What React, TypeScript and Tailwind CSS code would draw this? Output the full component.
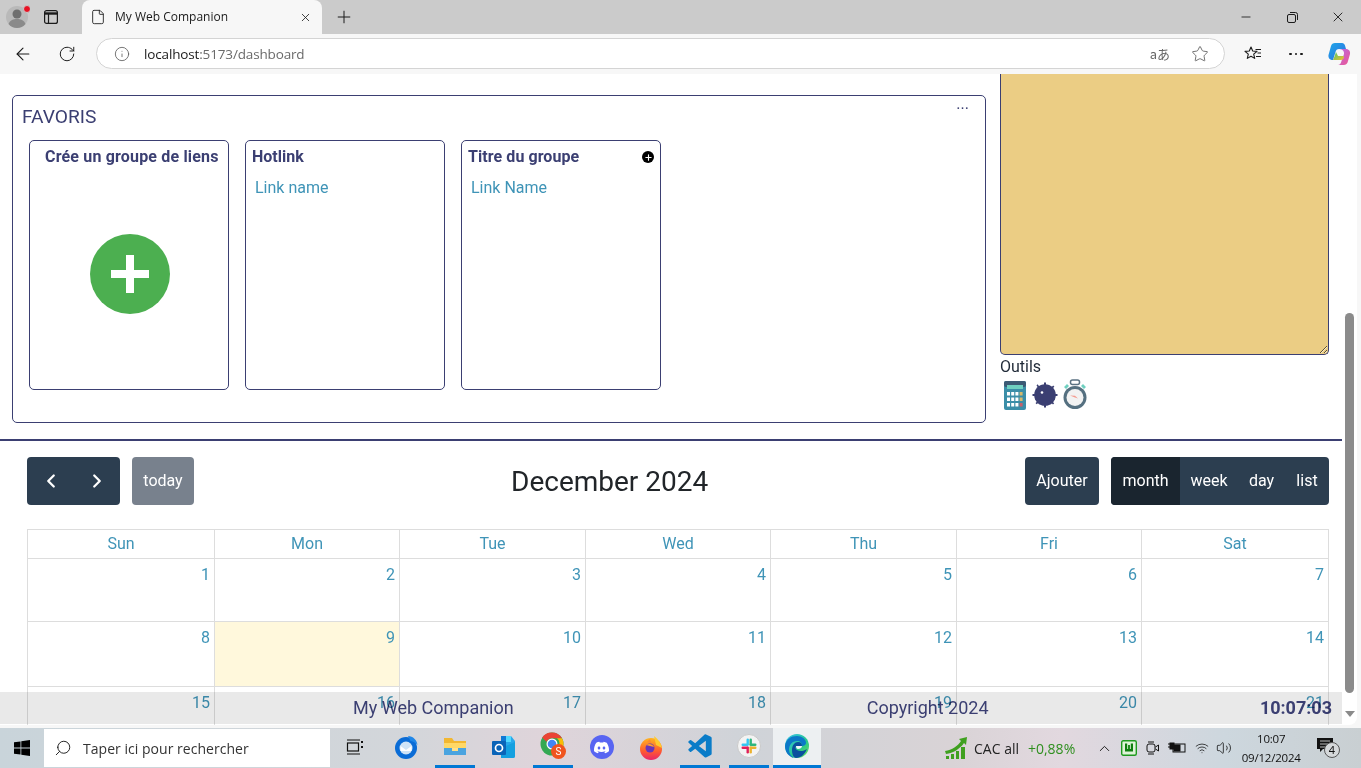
import { ArrowLeft, ChevronLeft, ChevronRight, ChevronUp, Info, Minus, Plus, RotateCw, Star, Volume2, Wifi, X, File, Search } from 'lucide-react';
import { SiDiscord } from 'react-icons/si';
import { BiLogoVisualStudio } from 'react-icons/bi';

const weeks = [
  [1, 2, 3, 4, 5, 6, 7],
  [8, 9, 10, 11, 12, 13, 14],
  [15, 16, 17, 18, 19, 20, 21],
];
const days = ['Sun', 'Mon', 'Tue', 'Wed', 'Thu', 'Fri', 'Sat'];

function Avatar() {
  return (
    <svg width="24" height="24" viewBox="0 0 24 24" className="ml-[5px]">
      <circle cx="11" cy="12" r="11" fill="#b9b9b9" />
      <circle cx="11" cy="9" r="4.5" fill="#6f6f6f" />
      <path d="M2.5 19c1.5-4 5-5 8.500-5s7 1 8.500 5a11 11 0 0 1-17 0z" fill="#8a8a8a" />
      <circle cx="21" cy="4" r="3.500" fill="#e81123" stroke="#cbcbcb" />
    </svg>
  );
}

function TabActions() {
  return (
    <svg width="16" height="16" viewBox="0 0 16 16" fill="none" stroke="#1a1a1a" strokeWidth="1.200">
      <rect x="1.600" y="1.600" width="12.800" height="12.800" rx="2" />
      <path d="M2 4.500h12" strokeWidth="2.400" />
      <path d="M5.500 5v9" />
    </svg>
  );
}

function Restore() {
  return (
    <svg width="11" height="11" viewBox="0 0 11 11" fill="none" stroke="#1a1a1a">
      <rect x="0.500" y="2.500" width="8" height="8" rx="1.500" />
      <path d="M3 .5h5.500a2 2 0 0 1 2 2V8" />
    </svg>
  );
}

function Favorites() {
  return (
    <svg width="18" height="18" viewBox="0 0 18 18" fill="none" stroke="#1a1a1a" strokeWidth="1.100">
      <path d="M7 2l1.700 4 4.300.4-3.300 2.800 1 4.200L7 11.200l-3.700 2.200 1-4.200L1 6.400l4.300-.4z" strokeLinejoin="round" />
      <path d="M11.500 4.500H17M13.500 8H17M12 11.500h5" />
    </svg>
  );
}

function Copilot() {
  return (
    <svg width="24" height="24" viewBox="0 0 24 24">
      <defs>
        <linearGradient id="copA" x1="0" y1="0" x2="1" y2="1">
          <stop offset="0" stopColor="#1fa8e8" />
          <stop offset="1" stopColor="#2f6fe0" />
        </linearGradient>
        <linearGradient id="copB" x1="0" y1="0" x2="1" y2="1">
          <stop offset="0" stopColor="#b56be8" />
          <stop offset="1" stopColor="#f0568e" />
        </linearGradient>
        <linearGradient id="copC" x1="0" y1="0" x2="1" y2="1">
          <stop offset="0" stopColor="#4cc36a" />
          <stop offset="1" stopColor="#f2c230" />
        </linearGradient>
      </defs>
      <path d="M8 1h7c1.500 0 2.500 1 3 2.500l1 3.500H12c-2 0-3 1-3.500 3L6 18c-3 0-5-2-4.500-5L4 4c.5-2 2-3 4-3z" fill="url(#copA)" />
      <path d="M12 7h7c3 0 4.500 2.500 4 5l-2 7c-.5 2.500-2 4-4.500 4H11c1.500 0 2.500-1 3-2.500L17 12c.5-2-1-5-5-5z" fill="url(#copB)" />
      <path d="M9 10c-1 3-2 6-3 8h8c1.500 0 2.500-1 3-2.500l-.5-1.500H11z" fill="url(#copC)" />
    </svg>
  );
}

function Calculator() {
  const keys = [0, 1, 2, 3, 4, 5, 6, 7, 8, 9, 10, 11];
  return (
    <svg width="22" height="29" viewBox="0 0 22 29">
      <rect width="22" height="29" rx="2" fill="#3b8ea8" />
      <rect width="22" height="6" rx="2" fill="#3c5a74" />
      <rect x="3" y="4" width="16" height="4" fill="#6fd0c0" />
      {keys.map((k) => (
        <rect
          key={k}
          x={3 + (k % 4) * 4.200}
          y={11 + Math.floor(k / 4) * 5.500}
          width="3"
          height="3.500"
          fill={k % 4 === 3 ? (k === 11 ? '#c9606a' : '#d8b96a') : '#ffffff'}
        />
      ))}
    </svg>
  );
}

function Mine() {
  return (
    <svg width="26" height="26" viewBox="0 0 26 26" fill="#3b3f72">
      <circle cx="13" cy="13" r="10.800" />
      <path d="M12 0.500h2v4h-2zM12 21.500h2v4h-2zM0.500 12h4v2h-4zM21.500 12h4v2h-4zM4.500 3.500l1.200-1.200 2 3-1.200 1zM18.500 20l1-1.200 2.700 2.500-1.200 1.200zM3.500 21l3-2.500 1 1.200-2.800 2.500zM18.500 6l2.700-2.500 1.200 1.200-3 2.500z" />
      <circle cx="10" cy="10.500" r="1.300" fill="#ffffff" />
    </svg>
  );
}

function Stopwatch() {
  return (
    <svg width="26" height="32" viewBox="0 0 26 32">
      <rect x="8.500" y="1" width="9" height="4.500" rx="2" fill="none" stroke="#5b7282" strokeWidth="1.500" />
      <path d="M2 8l3-3 2 2-3 3zM24 8l-3-3-2 2 3 3z" fill="#6fd0c0" />
      <circle cx="13" cy="18.500" r="11.500" fill="#557080" />
      <circle cx="13" cy="18.500" r="8.500" fill="#f2f2f2" />
      <path d="M13 18.500l-5-2 5 .2 3 2.800z" fill="#f59a8e" />
    </svg>
  );
}

function Thunderbird() {
  return (
    <svg width="24" height="24" viewBox="0 0 24 24">
      <circle cx="12" cy="13" r="11" fill="#0a6cd6" />
      <path d="M14 1c5 0 9 4 9.500 9-1.500-2-4-3.500-7-4z" fill="#1f87e8" />
      <circle cx="12" cy="13" r="6.500" fill="#cfe4f7" />
      <path d="M6.500 11l5.500 4 5.500-4v5h-11z" fill="#ffffff" />
    </svg>
  );
}

function Explorer() {
  return (
    <svg width="24" height="22" viewBox="0 0 24 22">
      <path d="M1 3h8l2 3h12v14H1z" fill="#f2b731" />
      <rect x="1" y="8" width="22" height="5" fill="#ffd866" />
      <rect x="1" y="13" width="22" height="7" fill="#4aa4e0" />
      <rect x="9" y="13" width="6" height="3" fill="#ffe08a" />
    </svg>
  );
}

function Outlook() {
  return (
    <svg width="24" height="24" viewBox="0 0 24 24">
      <path d="M9 1h10l4 5v15a2 2 0 0 1-2 2H9z" fill="#28a8ea" />
      <path d="M14 1h5v6h-5z" fill="#50d9ff" />
      <path d="M9 1h5v6H9z" fill="#0f78d4" />
      <path d="M9 13l14-6v14a2 2 0 0 1-2 2H9z" fill="#14a0e0" />
      <rect x="0" y="6" width="14" height="14" rx="1" fill="#0a64b8" />
      <circle cx="7" cy="13" r="3.500" fill="none" stroke="#ffffff" strokeWidth="1.700" />
    </svg>
  );
}

function Chrome() {
  return (
    <svg width="26" height="27" viewBox="0 0 26 27">
      <circle cx="12" cy="12" r="11.500" fill="#34a853" />
      <path d="M12 .5a11.500 11.500 0 0 1 10 5.800H12a6 6 0 0 0-5.500 3.500L2.200 5.500A11.500 11.500 0 0 1 12 .5z" fill="#ea4335" />
      <path d="M22 6.300a11.500 11.500 0 0 1-8 17L18 15a6 6 0 0 0-1-8.700z" fill="#fbbc05" />
      <circle cx="12" cy="12" r="5.500" fill="#ffffff" />
      <circle cx="12" cy="12" r="4.300" fill="#4285f4" />
      <circle cx="18.500" cy="19.500" r="7.500" fill="#f0541e" />
      <text x="18.500" y="23" textAnchor="middle" fontSize="10" fill="#ffffff" fontFamily="Roboto, sans-serif">S</text>
    </svg>
  );
}

function Firefox() {
  return (
    <svg width="24" height="25" viewBox="0 0 24 25">
      <defs>
        <linearGradient id="ffA" x1="0" y1="0" x2="0" y2="1">
          <stop offset="0" stopColor="#ffb520" />
          <stop offset="0.600" stopColor="#ff5a30" />
          <stop offset="1" stopColor="#e8256a" />
        </linearGradient>
      </defs>
      <circle cx="12" cy="14" r="11" fill="url(#ffA)" />
      <path d="M15 1c4 3 7 7 8 12l-6-3z" fill="#ffcb2e" />
      <path d="M4 6l4 1 3-3 1 4z" fill="#ff8a2a" />
      <circle cx="11" cy="13" r="4.500" fill="#6a35b8" />
      <path d="M7 10c3-2 7-1 8 2l-4-1z" fill="#ff9f2a" />
    </svg>
  );
}

function Slack() {
  return (
    <svg width="24" height="24" viewBox="0 0 24 24">
      <circle cx="12" cy="12" r="11.500" fill="#f3f3f3" stroke="#c9c9c9" />
      <rect x="9.500" y="4.500" width="2.400" height="7" rx="1.200" fill="#36c5f0" />
      <rect x="4.500" y="9.500" width="7" height="2.400" rx="1.200" fill="#36c5f0" />
      <rect x="12.500" y="4.500" width="2.400" height="7" rx="1.200" fill="#2eb67d" />
      <rect x="12.500" y="9.500" width="7" height="2.400" rx="1.200" fill="#2eb67d" />
      <rect x="12.500" y="12.500" width="2.400" height="7" rx="1.200" fill="#ecb22e" />
      <rect x="12.500" y="12.500" width="7" height="2.400" rx="1.200" fill="#ecb22e" />
      <rect x="9.500" y="12.500" width="2.400" height="7" rx="1.200" fill="#e01e5a" />
      <rect x="4.500" y="12.500" width="7" height="2.400" rx="1.200" fill="#e01e5a" />
    </svg>
  );
}

function Edge() {
  return (
    <svg width="24" height="24" viewBox="0 0 24 24">
      <defs>
        <linearGradient id="edA" x1="0" y1="0" x2="1" y2="1">
          <stop offset="0" stopColor="#35c1f1" />
          <stop offset="0.600" stopColor="#28c98a" />
          <stop offset="1" stopColor="#6fdc5a" />
        </linearGradient>
      </defs>
      <circle cx="12" cy="12" r="12" fill="url(#edA)" />
      <path d="M0 12C1 5 6 2 12 2c5 0 9 3 9 7 0 2-2 3-4 3 0-3-2-5-5-5-5 0-8 4-8 9 0 3 2 6 5 8C4 23 0 18 0 12z" fill="#0c78c8" />
      <path d="M7 16c0-5 3-8 6-8 3 0 4 2 4 4h-5c-2 0-2 3 0 4 3 2 7 1 10-1-2 5-6 9-11 9-2 0-4-3-4-8z" fill="#0a4f9e" />
      <path d="M11 12h6c0 2-2 3-4 3-1 0-2-1-2-3z" fill="#f2f7fb" />
    </svg>
  );
}

function Cac() {
  return (
    <svg width="24" height="24" viewBox="0 0 24 24" fill="#3fa01f">
      <path d="M1 15C8 14 14 10 17 5l-2-2 8-2-1 8-2-2C16 13 9 17 2 18z" />
      <rect x="2" y="20" width="3" height="3" />
      <rect x="7" y="18" width="3" height="5" />
      <rect x="12" y="15" width="3" height="8" />
      <rect x="17" y="11" width="4" height="12" />
    </svg>
  );
}

function TaskView() {
  return (
    <svg width="18" height="16" viewBox="0 0 18 16" fill="none" stroke="#111111" strokeWidth="1.200">
      <path d="M1 1h13M1 15h13" />
      <rect x="1.500" y="4" width="11" height="8" />
      <path d="M16 2v2M16 7v2" strokeWidth="2" />
    </svg>
  );
}

function TrayIcons() {
  return (
    <>
      <svg width="16" height="16" viewBox="0 0 16 16" className="ml-[8px]">
        <rect x="0.700" y="0.700" width="14.600" height="14.600" rx="1.500" fill="#dff3d8" stroke="#1f9a1f" strokeWidth="1.400" />
        <path d="M4 3.500v8h8v-8h-2.200v5.500H8.900V5H7.100v4H6.200V3.500z" fill="#0f7f0f" />
      </svg>
      <svg width="14" height="18" viewBox="0 0 14 18" fill="none" stroke="#111111" className="ml-[9px]">
        <path d="M2 3h6M2 15h6" />
        <rect x="1" y="5" width="8" height="8" rx="2" />
        <path d="M9.500 8l3-2v6l-3-2" />
      </svg>
      <svg width="18" height="12" viewBox="0 0 18 12" fill="none" stroke="#111111" className="ml-[8px]">
        <path d="M0 2h2M0 5h2" />
        <rect x="2" y="1" width="4" height="6" fill="#111111" />
        <rect x="5" y="2" width="12" height="8" />
        <rect x="6" y="3" width="6" height="6" fill="#111111" />
      </svg>
    </>
  );
}

function Notification() {
  return (
    <div className="relative w-[20px] h-[20px] mr-[24px]">
      <svg width="16" height="14" viewBox="0 0 16 14">
        <path d="M0 0h16v11H6l-3 3v-3H0z" fill="#111111" />
        <path d="M3 3h10M3 6h10M3 9h7" stroke="#e8e8e8" strokeWidth="0.800" />
      </svg>
      <span className="absolute left-[7px] top-[4px] w-[16px] h-[16px] rounded-full border border-[#555] bg-[#d5d8da] text-[11px] leading-[14px] text-center text-[#111] font-['Noto_Sans',sans-serif]">
        4
      </span>
    </div>
  );
}

function BrowserChrome() {
  return (
    <>
      <div className="h-[34px] bg-[#cbcbcb] flex items-end shrink-0">
        <div className="w-[82px] h-[34px] flex items-center pl-[1px]">
          <Avatar />
          <span className="ml-[13px]">
            <TabActions />
          </span>
        </div>
        <div className="w-[240px] h-[34px] bg-[#f7f7f7] rounded-t-lg flex items-center pl-[8px] pr-[10px]">
          <File size={16} strokeWidth={1.300} color="#1a1a1a" />
          <span className="ml-[9px] flex-1 text-[12px] text-[#1a1a1a] font-['Open_Sans',sans-serif]">My Web Companion</span>
          <X size={13} strokeWidth={1.500} color="#1a1a1a" />
        </div>
        <div className="h-[34px] flex items-center ml-[12px]">
          <Plus size={20} strokeWidth={1.200} color="#1a1a1a" />
        </div>
        <div className="h-[34px] flex items-center ml-auto">
          <div className="w-[46px] flex justify-center">
            <Minus size={14} strokeWidth={1.400} color="#111111" />
          </div>
          <div className="w-[46px] flex justify-center">
            <Restore />
          </div>
          <div className="w-[46px] flex justify-center">
            <X size={16} strokeWidth={1.300} color="#111111" />
          </div>
        </div>
      </div>
      <div className="h-[40px] bg-[#f7f7f7] flex items-center shrink-0">
        <div className="w-[46px] flex justify-center">
          <ArrowLeft size={20} strokeWidth={1.300} color="#1a1a1a" />
        </div>
        <div className="w-[42px] flex justify-center">
          <RotateCw size={18} strokeWidth={1.300} color="#1a1a1a" />
        </div>
        <div className="ml-[8px] mb-[1px] w-[1129px] h-[31px] rounded-full bg-white border border-[#d4d4d4] flex items-center pl-[17px] pr-[15px]">
          <Info size={16} strokeWidth={1.200} color="#555" />
          <span className="ml-[14px] pt-[1px] text-[13.500px] text-[#1a1a1a] font-['Open_Sans',sans-serif] tracking-[-0.15px]">
            localhost<span className="text-[#6a6a6a]">:5173/dashboard</span>
          </span>
          <span className="ml-auto text-[13px] text-[#666] font-['Noto_Sans_CJK_JP',sans-serif]">aあ</span>
          <Star size={18} strokeWidth={1.100} color="#555" className="ml-[21px]" />
        </div>
        <div className="ml-[19px]">
          <Favorites />
        </div>
        <div className="ml-[27px] flex gap-[3px]">
          <span className="w-[2.500px] h-[2.500px] rounded-full bg-[#1a1a1a]" />
          <span className="w-[2.500px] h-[2.500px] rounded-full bg-[#1a1a1a]" />
          <span className="w-[2.500px] h-[2.500px] rounded-full bg-[#1a1a1a]" />
        </div>
        <div className="ml-[24px]">
          <Copilot />
        </div>
      </div>
    </>
  );
}

function Favoris() {
  return (
    <section className="relative mt-[21px] w-[974px] h-[328px] border border-[#3b3f72] rounded-[5px] pl-[9px] pt-[9px]">
      <h2 className="text-[19.200px] leading-[24px] text-[#3b3f72]">FAVORIS</h2>
      <span className="absolute right-[16px] top-[1px] text-[16px] leading-[14px] text-[#3b3f72]">...</span>
      <div className="flex gap-[16px] mt-[11px] pl-[7px]">
        <div className="w-[200px] h-[250px] border border-[#3b3f72] rounded-[5px] flex flex-col">
          <h3 className="pl-[15px] pt-[6px] text-[16px] leading-[20px] font-bold text-[#3b3f72] whitespace-nowrap tracking-[0.17px]">Crée un groupe de liens</h3>
          <div className="mt-[67px] ml-[60px] w-[80px] h-[80px] rounded-full bg-[#4caf50] flex items-center justify-center">
            <svg width="38" height="38" viewBox="0 0 38 38" fill="#ffffff">
              <path d="M15 0h8v15h15v8H23v15h-8V23H0v-8h15z" />
            </svg>
          </div>
        </div>
        <div className="w-[200px] h-[250px] border border-[#3b3f72] rounded-[5px] px-[6px] pt-[6px]">
          <h3 className="text-[16px] leading-[20px] font-bold text-[#3b3f72]">Hotlink</h3>
          <p className="mt-[11px] ml-[3px] text-[16px] leading-[20px] text-[#3f94b7]">Link name</p>
        </div>
        <div className="w-[200px] h-[250px] border border-[#3b3f72] rounded-[5px] px-[6px] pt-[6px]">
          <div className="flex items-center justify-between">
            <h3 className="text-[16px] leading-[20px] font-bold text-[#3b3f72] tracking-[0.07px]">Titre du groupe</h3>
            <span className="w-[12px] h-[12px] rounded-full bg-black flex items-center justify-center">
              <Plus size={9} strokeWidth={3} color="#ffffff" />
            </span>
          </div>
          <p className="mt-[11px] ml-[3px] text-[16px] leading-[20px] text-[#3f94b7]">Link Name</p>
        </div>
      </div>
    </section>
  );
}

function Notes() {
  return (
    <aside className="ml-[14px] w-[329px]">
      <textarea
        readOnly
        className="block w-[329px] h-[281px] bg-[#ebcd84] border border-t-0 border-[#3b3f72] rounded-b-[5px] outline-none"
      />
      <p className="mt-[2px] text-[16px] leading-[19px] text-[#1f2937]">Outils</p>
      <div className="flex items-center h-[32px] mt-[3px] pl-[4px]">
        <Calculator />
        <span className="ml-[6px]">
          <Mine />
        </span>
        <span className="ml-[4px]">
          <Stopwatch />
        </span>
      </div>
    </aside>
  );
}

function Calendar() {
  return (
    <div className="pl-[27px] pr-[13px] pt-[16px]">
      <div className="flex items-center h-[48px]">
        <div className="w-[93px] h-[48px] rounded-[4px] bg-[#2c3e50] flex items-center text-white">
          <span className="w-[47px] flex justify-center">
            <ChevronLeft size={22} strokeWidth={2.500} />
          </span>
          <span className="w-[46px] flex justify-center">
            <ChevronRight size={22} strokeWidth={2.500} />
          </span>
        </div>
        <div className="ml-[12px] w-[62px] h-[48px] rounded-[4px] bg-[#78818d] text-white text-[16px] flex items-center justify-center">today</div>
        <h1 className="ml-[317px] mt-[2px] w-[199px] text-[28px] leading-[34px] text-[#212529] whitespace-nowrap">December 2024</h1>
        <div className="ml-auto w-[74px] h-[48px] rounded-[4px] bg-[#2c3e50] text-white text-[16px] flex items-center justify-center">Ajouter</div>
        <div className="ml-[12px] w-[218px] h-[48px] rounded-[4px] bg-[#2c3e50] text-white text-[16px] flex overflow-hidden">
          <span className="w-[69px] bg-[#1a252f] flex items-center justify-center">month</span>
          <span className="w-[58px] flex items-center justify-center">week</span>
          <span className="w-[47px] flex items-center justify-center">day</span>
          <span className="w-[44px] flex items-center justify-center">list</span>
        </div>
      </div>
      <div className="mt-[24px] w-[1302px] border-l border-t border-[#ddd] grid grid-cols-[187px_185px_186px_185px_186px_185px_187px] text-[#3f94b7] text-[16px]">
        {days.map((d) => (
          <div key={d} className="h-[29px] border-r border-b border-[#ddd] flex items-center justify-center">
            {d}
          </div>
        ))}
        {weeks.map((w, i) =>
          w.map((n) => (
            <div
              key={n}
              className={`border-r border-b border-[#ddd] pr-[4px] pt-[6px] text-right leading-[20px] ${i === 0 ? 'h-[63px]' : 'h-[65px]'} ${n === 9 ? 'bg-[#fff8dc]' : ''}`}
            >
              {n}
            </div>
          )),
        )}
      </div>
    </div>
  );
}

function Taskbar() {
  const icon = 'w-[49px] h-[38px] flex items-center justify-center';
  const slot = 'w-[49px] h-[40px] flex justify-center';
  const running = 'w-[40px] h-[40px] pb-[2px] flex items-center justify-center border-b-[3px] border-[#0078d4]';
  return (
    <div className="h-[40px] shrink-0 flex items-start bg-[linear-gradient(90deg,#c9d4da_0%,#d3d6da_30%,#dfd4da_40%,#cfd3d8_55%,#d9d3d6_70%,#e2d8df_78%,#cdd7de_90%,#c9cfd2_100%)]">
      <div className="w-[44px] h-[38px] flex items-center justify-center pt-[2px]">
        <svg width="16" height="16" viewBox="0 0 16 16" fill="#000000">
          <path d="M0 2.300l6.500-.9v6.200H0zM7.300 1.300L16 0v7.600H7.300zM0 8.400h6.500v6.200L0 13.700zM7.300 8.400H16V16l-8.700-1.300z" />
        </svg>
      </div>
      <div className="mt-[1px] w-[286px] h-[38px] bg-white flex items-center pl-[10px]">
        <Search size={18} strokeWidth={1.200} color="#111" className="-scale-x-100" />
        <span className="ml-[11px] text-[14px] text-[#333] font-['Open_Sans',sans-serif] tracking-[0.03px]">Taper ici pour rechercher</span>
      </div>
      <div className={`${icon} mr-[2px]`}>
        <TaskView />
      </div>
      <div className={icon}>
        <Thunderbird />
      </div>
      <div className={slot}>
        <div className={running}>
          <Explorer />
        </div>
      </div>
      <div className={icon}>
        <Outlook />
      </div>
      <div className={slot}>
        <div className={running}>
          <Chrome />
        </div>
      </div>
      <div className={icon}>
        <span className="w-[24px] h-[24px] rounded-full bg-[#5865f2] flex items-center justify-center">
          <SiDiscord size={15} color="#ffffff" />
        </span>
      </div>
      <div className={icon}>
        <Firefox />
      </div>
      <div className={slot}>
        <div className={running}>
          <BiLogoVisualStudio size={28} color="#0a7cc8" />
        </div>
      </div>
      <div className={slot}>
        <div className={running}>
          <Slack />
        </div>
      </div>
      <div className="w-[48px] h-[40px] pb-[2px] flex items-center justify-center border-b-[3px] border-[#0078d4] bg-[#edf0f2]">
        <Edge />
      </div>
      <div className="flex-1 h-[38px] flex items-center pl-[123px] pt-[2px] text-[14px] font-['Open_Sans',sans-serif] whitespace-nowrap">
        <Cac />
        <span className="ml-[6px] text-[#222]">CAC all</span>
        <span className="ml-[9px] text-[#2f8f1f]">+0,88%</span>
        <ChevronUp size={17} strokeWidth={1.300} color="#111" className="ml-[21px]" />
        <TrayIcons />
        <Wifi size={14} strokeWidth={1.300} color="#111" className="ml-[9px]" />
        <Volume2 size={16} strokeWidth={1.200} color="#111" className="ml-[7px]" />
        <div className="ml-[8px] w-[62px] text-center text-[11.500px] tracking-[-0.2px] leading-[19px] text-[#111]">
          <p>10:07</p>
          <p>09/12/2024</p>
        </div>
        <div className="ml-auto">
          <Notification />
        </div>
      </div>
    </div>
  );
}

export default function App() {
  return (
    <div className="w-screen h-screen overflow-hidden flex flex-col bg-[#f7f7f7] font-['Roboto',sans-serif]">
      <BrowserChrome />
      <div className="h-[651px] shrink-0 flex pr-[4px]">
        <div className="relative flex-1 flex bg-white rounded-br-lg overflow-hidden">
          <main className="relative w-[1342px] h-[651px] overflow-hidden">
            <div className="flex pl-[12px] h-[365px]">
              <Favoris />
              <Notes />
            </div>
            <hr className="border-0 h-[2px] bg-[#3b3f72]" />
            <Calendar />
            {/* footer sits over the calendar, numbers show through */}
            <footer className="absolute left-0 right-0 top-[618px] h-[32px] bg-[#e9e9e9] mix-blend-multiply flex items-center pb-[1px] pl-[353px] pr-[10px] text-[18px] text-[#3b3f72]">
              <span>My Web Companion</span>
              <span className="ml-[353px]">Copyright 2024</span>
              <span className="ml-auto font-bold">10:07:03</span>
            </footer>
          </main>
          <div className="flex-1 pl-[3px] pt-[239px] flex flex-col">
            <div className="w-[9px] h-[380px] bg-[#8b8b8b] rounded-full" />
            <svg width="10" height="6" viewBox="0 0 10 6" className="mt-[18px]" fill="#8a8a8a">
              <path d="M0 0h10L5 6z" />
            </svg>
          </div>
        </div>
      </div>
      <div className="h-[3px] shrink-0" />
      <Taskbar />
    </div>
  );
}
